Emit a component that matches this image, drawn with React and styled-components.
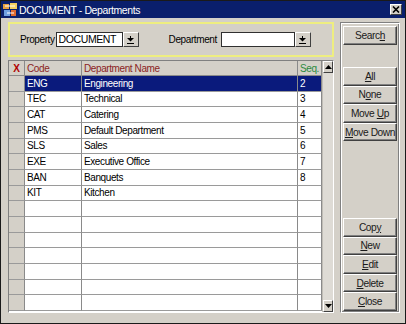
import styled, { createGlobalStyle } from "styled-components";

const GlobalStyle = createGlobalStyle`
  html, body {
    margin: 0;
    padding: 0;
    background: #d4d0c8;
  }
  body {
    font-family: "Liberation Sans", Arial, sans-serif;
    font-size: 10px;
    letter-spacing: -0.4px;
    color: #000;
  }
`;

const Window = styled.div`
  width: 406px;
  height: 324px;
  box-sizing: border-box;
  border: 1px solid #1a1a1a;
  background: #d4d0c8;
  display: flex;
  flex-direction: column;
`;

const TitleBar = styled.div`
  height: 17px;
  background: #0a1f6c;
  color: #fff;
  display: flex;
  align-items: center;
  gap: 2px;
  padding: 0 3px 0 2px;
  font-size: 10.5px;
`;

const TitleText = styled.span`
  flex: 1;
  padding-top: 1px;
`;

const CloseBox = styled.div`
  width: 12px;
  height: 11px;
  box-sizing: border-box;
  background: #d4d0c8;
  border: 1px solid;
  border-color: #fff #404040 #404040 #fff;
  display: flex;
  align-items: center;
  justify-content: center;
`;

const Body = styled.div`
  flex: 1;
  display: flex;
  gap: 6px;
  padding: 4px 5px 10px 7px;
  min-height: 0;
`;

const LeftCol = styled.div`
  width: 326px;
  display: flex;
  flex-direction: column;
  gap: 3px;
`;

const FilterBox = styled.div`
  height: 35px;
  box-sizing: border-box;
  border: 2px solid #eeee80;
  display: flex;
  align-items: center;
  padding: 0 0 0 10px;
`;

const Label = styled.span`
  margin-left: ${(p) => p.$offset || 0}px;
  margin-right: ${(p) => p.$gap || 1}px;
`;

const Input = styled.div`
  width: ${(p) => p.$width}px;
  height: 15px;
  box-sizing: border-box;
  background: #fff;
  border: 1px solid #303030;
  padding: 0 2px;
  line-height: 13px;
  font-size: 10.5px;
`;

const DropButton = styled.div`
  width: 16px;
  height: 15px;
  box-sizing: border-box;
  background: #d4d0c8;
  border: 1px solid;
  border-color: #fff #404040 #404040 #fff;
  display: flex;
  align-items: center;
  justify-content: center;
`;

const Grid = styled.div`
  flex: 1;
  display: flex;
  border: 1px solid;
  border-color: #808080 #fff #fff #808080;
  min-height: 0;
`;

const Table = styled.div`
  flex: 1;
  display: flex;
  flex-direction: column;
  background: #fff;
`;

const RowBox = styled.div`
  display: grid;
  grid-template-columns: 16px 57px 216px 24px;
  height: ${(p) => (p.$header ? 15 : 15.67)}px;
`;

const Cell = styled.div`
  box-sizing: border-box;
  border-right: 1px solid #8a8a8a;
  border-bottom: 1px solid ${(p) => (p.$header ? "#8a8a8a" : "#9a9a9a")};
  padding-left: 2px;
  white-space: nowrap;
  overflow: hidden;
  display: flex;
  align-items: center;
  background: ${(p) => (p.$selected ? "#0a1a7c" : "#fff")};
  color: ${(p) => (p.$selected ? "#fff" : "#000")};
`;

const MarkCell = styled(Cell)`
  background: #d4d0c8;
  justify-content: center;
  padding-left: 0;
`;

const HeadCell = styled(Cell)`
  background: #d4d0c8;
  color: ${(p) => p.$color || "#8b1f1f"};
`;

const XMark = styled.span`
  color: #b00000;
  font-weight: bold;
  font-size: 10px;
`;

const ScrollBar = styled.div`
  width: 12px;
  display: flex;
  flex-direction: column;
  justify-content: space-between;
  background: #dedbd5;
  border-left: 1px solid #c0bdb6;
`;

const ScrollArrow = styled.div`
  height: 12px;
  box-sizing: border-box;
  background: #d4d0c8;
  border: 1px solid;
  border-color: #fff #404040 #404040 #fff;
  display: flex;
  align-items: center;
  justify-content: center;
`;

const SidePanel = styled.div`
  width: 60px;
  box-sizing: border-box;
  border: 1px solid;
  border-color: #808080 #fff #fff #808080;
  box-shadow: inset 1px 1px #fff, inset -1px -1px #808080;
  display: flex;
  flex-direction: column;
  padding: 3px 2px 1px 2px;
`;

const ButtonGroup = styled.div`
  display: flex;
  flex-direction: column;
  margin-top: ${(p) => p.$top || 0}px;
`;

const Spacer = styled.div`
  flex: 1;
`;

const Button = styled.div`
  height: ${(p) => p.$h || 18.6}px;
  box-sizing: border-box;
  background: #d4d0c8;
  border: 1px solid;
  border-color: #fff #404040 #404040 #fff;
  box-shadow: inset -1px -1px #808080;
  display: flex;
  align-items: center;
  justify-content: center;
  font-size: 10.2px;
  color: #1a1a1a;
  white-space: pre;
`;

const DropIcon = () => (
  <svg width="7" height="8" viewBox="0 0 7 8">
    <rect x="3" y="0" width="1" height="2" fill="#000" />
    <path d="M0 2 H7 L3.5 5.5 Z" fill="#000" />
    <rect x="0" y="7" width="7" height="1" fill="#000" />
  </svg>
);

const Arrow = ({ up }) => (
  <svg width="7" height="4" viewBox="0 0 7 4">
    <path d={up ? "M3.5 0 L7 4 H0 Z" : "M0 0 H7 L3.5 4 Z"} fill="#000" />
  </svg>
);

const AppIcon = () => (
  <svg width="14" height="14" viewBox="0 0 14 14">
    <rect x="0" y="1" width="6" height="5" fill="#e8a040" />
    <rect x="7" y="0" width="7" height="6" fill="#f4d060" />
    <rect x="1" y="7" width="6" height="6" fill="#6fa0e0" />
    <rect x="8" y="7" width="5" height="6" fill="#e06a30" />
    <path d="M2 3 H12 M4 10 H11" stroke="#fff" strokeWidth="1" />
  </svg>
);

// label with one underlined mnemonic letter
const Key = ({ text, at }) => (
  <span>
    {text.slice(0, at)}
    <u>{text[at]}</u>
    {text.slice(at + 1)}
  </span>
);

const rows = [
  ["ENG", "Engineering", "2"],
  ["TEC", "Technical", "3"],
  ["CAT", "Catering", "4"],
  ["PMS", "Default Department", "5"],
  ["SLS", "Sales", "6"],
  ["EXE", "Executive Office", "7"],
  ["BAN", "Banquets", "8"],
  ["KIT", "Kitchen", ""],
];

while (rows.length < 15) rows.push(["", "", ""]);

export default function App() {
  return (
    <>
      <GlobalStyle />
      <Window>
        <TitleBar>
          <AppIcon />
          <TitleText>DOCUMENT - Departments</TitleText>
          <CloseBox>
            <svg width="8" height="7" viewBox="0 0 8 7">
              <path d="M1 0.5 L7 6.5 M7 0.5 L1 6.5" stroke="#000" strokeWidth="1.6" />
            </svg>
          </CloseBox>
        </TitleBar>
        <Body>
          <LeftCol>
            <FilterBox>
              <Label $gap={1}>Property</Label>
              <Input $width={67}>DOCUMENT</Input>
              <DropButton>
                <DropIcon />
              </DropButton>
              <Label $offset={30} $gap={4}>
                Department
              </Label>
              <Input $width={74} />
              <DropButton>
                <DropIcon />
              </DropButton>
            </FilterBox>
            <Grid>
              <Table>
                <RowBox $header>
                  <MarkCell $header>
                    <XMark>X</XMark>
                  </MarkCell>
                  <HeadCell $header>Code</HeadCell>
                  <HeadCell $header>Department Name</HeadCell>
                  <HeadCell $header $color="#2e8a3e">
                    Seq.
                  </HeadCell>
                </RowBox>
                {rows.map((r, i) => (
                  <RowBox key={i}>
                    <MarkCell />
                    <Cell $selected={i === 0}>{r[0]}</Cell>
                    <Cell $selected={i === 0}>{r[1]}</Cell>
                    <Cell $selected={i === 0}>{r[2]}</Cell>
                  </RowBox>
                ))}
              </Table>
              <ScrollBar>
                <ScrollArrow>
                  <Arrow up />
                </ScrollArrow>
                <ScrollArrow>
                  <Arrow />
                </ScrollArrow>
              </ScrollBar>
            </Grid>
          </LeftCol>
          <SidePanel>
            <Button $h={19}>
              <Key text="Search" at={5} />
            </Button>
            <ButtonGroup $top={22}>
              <Button>
                <Key text="All" at={0} />
              </Button>
              <Button>
                <Key text="None" at={1} />
              </Button>
              <Button>
                <Key text="Move Up" at={5} />
              </Button>
              <Button>
                <Key text="Move Down" at={0} />
              </Button>
            </ButtonGroup>
            <Spacer />
            <ButtonGroup>
              <Button>
                <Key text="Copy" at={3} />
              </Button>
              <Button>
                <Key text="New" at={0} />
              </Button>
              <Button>
                <Key text="Edit" at={0} />
              </Button>
              <Button>
                <Key text="Delete" at={0} />
              </Button>
              <Button>
                <Key text="Close" at={0} />
              </Button>
            </ButtonGroup>
          </SidePanel>
        </Body>
      </Window>
    </>
  );
}
